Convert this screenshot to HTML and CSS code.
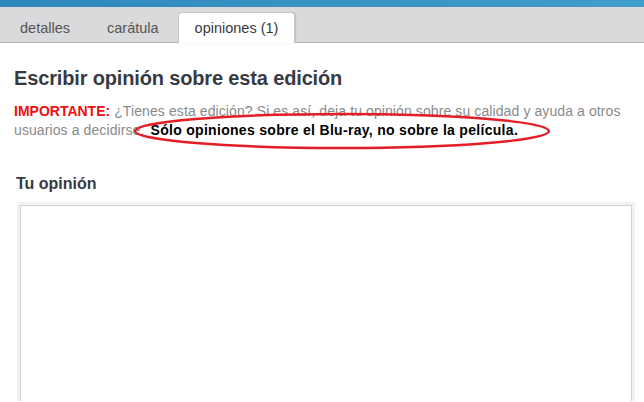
FILE: index.html
```html
<!DOCTYPE html>
<html lang="es">
<head>
    <meta charset="UTF-8">
    <title>Opiniones</title>
    <link rel="stylesheet" href="styles.css">
</head>
<body>
    <div class="topbar"></div>
    <div class="tabs">
        <a class="tab" href="#">detalles</a>
        <a class="tab" href="#">carátula</a>
        <a class="tab active" href="#">opiniones (1)</a>
    </div>

    <div class="content">
        <h1>Escribir opinión sobre esta edición</h1>
        <p class="notice">
            <span class="important">IMPORTANTE:</span> ¿Tienes esta edición? Si es así, deja tu opinión sobre su calidad y ayuda a otros usuarios a decidirse. <strong>Sólo opiniones sobre el Blu-ray, no sobre la película.</strong>
            <svg class="circle" width="420" height="40" viewBox="0 0 420 40">
                <ellipse cx="210" cy="20" rx="207" ry="17" fill="none" stroke="#e41e26" stroke-width="2.4"/>
            </svg>
        </p>

        <h2>Tu opinión</h2>
        <div class="box">
            <textarea></textarea>
        </div>
    </div>
</body>
</html>
```

FILE: styles.css
```css
body {
    margin: 0;
    font-family: "Liberation Sans", Arial, sans-serif;
    background-color: #fff;
    overflow: hidden;
}
.topbar {
    height: 7px;
    background: linear-gradient(to right, #2f88ba, #419dcb);
}
.tabs {
    display: flex;
    align-items: flex-end;
    gap: 1px;
    height: 35px;
    padding-left: 2px;
    background-color: #d9dadc;
    border-bottom: 1px solid #b3b3b3;
}
.tab {
    height: 30px;
    line-height: 31px;
    padding: 0 18px;
    font-size: 14.5px;
    color: #555;
    text-decoration: none;
    margin-bottom: -1px;
}
.tab.active {
    background-color: #fff;
    color: #3a3a3a;
    border: 1px solid #c8c8c8;
    border-bottom: none;
    border-radius: 4px 4px 0 0;
    box-shadow: 1px 0 1px #bbb;
    padding: 0 16px;
}
.content {
    padding: 0 9px 0 14px;
}
h1 {
    margin: 24px 0 0 0;
    font-size: 20px;
    letter-spacing: -0.15px;
    color: #373a42;
}
.notice {
    position: relative;
    margin: 12px 0 0 0;
    font-size: 14px;
    line-height: 19px;
    letter-spacing: 0.1px;
    color: #8a8a8a;
}
.important {
    color: #ee1111;
    font-weight: bold;
    letter-spacing: 0;
}
.notice strong {
    color: #000;
    padding-left: 2px;
    letter-spacing: 0.3px;
}
.circle {
    position: absolute;
    left: 118px;
    top: 9px;
}
h2 {
    margin: 35px 0 0 2px;
    font-size: 16px;
    color: #373a42;
}
.box {
    margin: 9px 0 0 3px;
    border: 3px solid #f2f2f2;
    border-bottom: none;
    border-radius: 3px 3px 0 0;
    height: 196px;
}
textarea {
    display: block;
    box-sizing: border-box;
    width: 100%;
    height: 100%;
    border: 1px solid #d2d2d2;
    border-bottom: none;
    resize: none;
    margin: 0;
    padding: 4px;
}
```
